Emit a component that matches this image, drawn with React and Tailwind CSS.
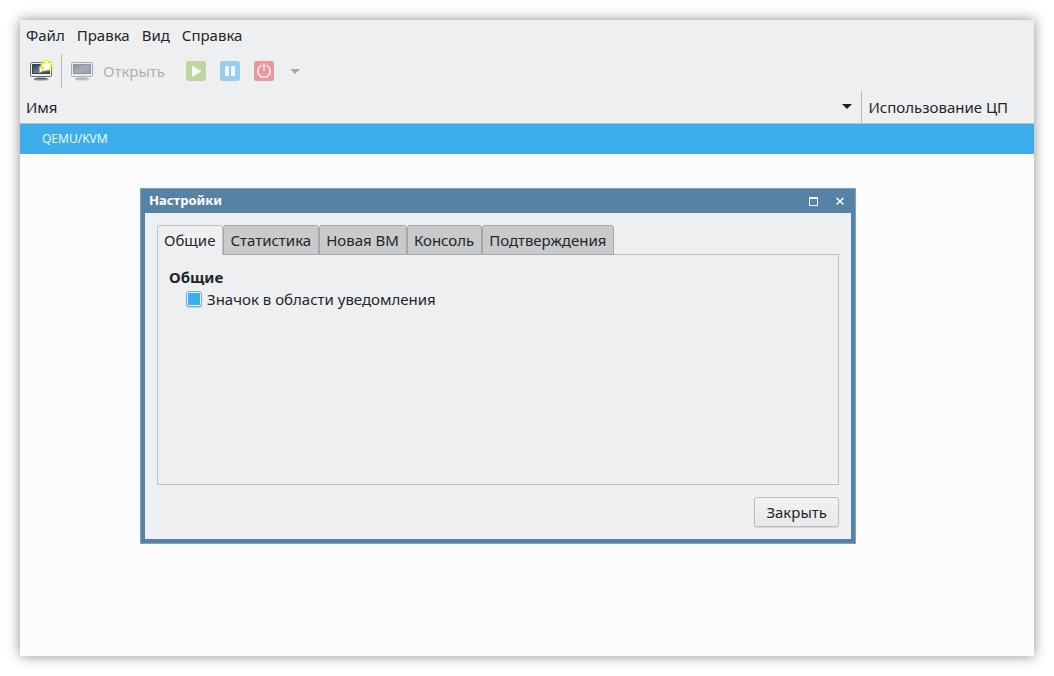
import React, { useState } from 'react';

const menuItems = ['Файл', 'Правка', 'Вид', 'Справка'];
const tabs = ['Общие', 'Статистика', 'Новая ВМ', 'Консоль', 'Подтверждения'];

const Monitor = ({ id, dark, children }) => (
  <svg width="24" height="24" viewBox="0 0 24 24" aria-hidden="true">
    <defs>
      <linearGradient id={id} x1="0" y1="0" x2="1" y2="1">
        <stop offset="0" stopColor={dark ? '#2b3a50' : '#8f98a6'} />
        <stop offset="0.5" stopColor={dark ? '#66758a' : '#a5acb7'} />
        <stop offset="1" stopColor={dark ? '#36445a' : '#959dab'} />
      </linearGradient>
    </defs>
    <ellipse cx="12" cy="20.5" rx="8" ry="1.4" fill="#000" opacity={dark ? 0.25 : 0.1} />
    <path d="M8 17.5h8v2H8z" fill={dark ? '#b5b5b2' : '#d0d0d0'} />
    <rect x="5.5" y="19" width="13" height="1.6" rx="0.8" fill={dark ? '#5c5c5a' : '#acacac'} />
    <rect x="1.5" y="3.5" width="21" height="14" rx="1.2" fill={dark ? '#eeeeec' : '#ececec'} stroke={dark ? '#6a6c69' : '#adadad'} />
    <rect x="3.5" y="5.5" width="17" height="9" fill={`url(#${id})`} stroke={dark ? '#3b4452' : '#8d949f'} />
    {children}
  </svg>
);

const NewVmIcon = () => (
  <Monitor id="screen-new" dark>
    <defs>
      <radialGradient id="star-glow">
        <stop offset="0.7" stopColor="#ecf000" />
        <stop offset="1" stopColor="#ecf000" stopOpacity="0.25" />
      </radialGradient>
    </defs>
    <path d="M10.5 7v7l5.5-3.5z" fill="#fff" />
    <rect x="11" y="1" width="13" height="11.5" rx="3" fill="url(#star-glow)" />
    <path d="M17.2 1.2l1.8 3 4 .1-2.2 3.1 1.5 4-4.2-1.2-3.5 2.2.2-4-3-2.4 3.8-1z" fill="#fff" />
  </Monitor>
);

const RunIcon = () => (
  <svg width="20" height="20" viewBox="0 0 20 20" aria-hidden="true">
    <rect width="20" height="20" rx="3" fill="#bdd69f" />
    <path d="M6.5 5v10.4L15 10.2z" fill="#f7f9f4" stroke="#f7f9f4" strokeWidth="0.8" strokeLinejoin="round" />
  </svg>
);

const PauseIcon = () => (
  <svg width="20" height="20" viewBox="0 0 20 20" aria-hidden="true">
    <rect width="20" height="20" rx="3" fill="#9accf0" />
    <rect x="5" y="5" width="4" height="10" rx="0.6" fill="#f5f9fc" />
    <rect x="11" y="5" width="4" height="10" rx="0.6" fill="#f5f9fc" />
  </svg>
);

const PowerIcon = () => (
  <svg width="20" height="20" viewBox="0 0 20 20" aria-hidden="true">
    <rect width="20" height="20" rx="2" fill="#e8979b" />
    <path d="M7 4.6a6.2 6.2 0 1 0 6 0M10 2.8v6.4" fill="none" stroke="#f8ecec" strokeWidth="1.6" strokeLinecap="round" />
  </svg>
);

const Arrow = ({ className }) => (
  <svg width="10" height="5" viewBox="0 0 10 5" className={className} aria-hidden="true">
    <path d="M0 0h10L5 5z" fill="currentColor" />
  </svg>
);

const Toolbar = () => (
  <div className="flex h-10 items-center px-2">
    <button type="button" aria-label="Создать" className="mr-2 flex pl-px">
      <NewVmIcon />
    </button>
    <div className="h-[34px] w-px bg-[#bbbcbd]" />
    <button type="button" disabled className="ml-2 flex items-center gap-2 text-[#afb0b2]">
      <Monitor id="screen-open" />
      <span className="pl-px">Открыть</span>
    </button>
    <div className="ml-[21px] flex items-center gap-3.5">
      <button type="button" disabled aria-label="Запустить"><RunIcon /></button>
      <button type="button" disabled aria-label="Приостановить"><PauseIcon /></button>
      <button type="button" disabled aria-label="Выключить"><PowerIcon /></button>
    </div>
    <button type="button" disabled aria-label="Действия" className="ml-4 text-[#a5a6a8]">
      <Arrow />
    </button>
  </div>
);

const VmTable = () => (
  <table className="w-full table-fixed border-collapse text-left">
    <thead>
      <tr className="h-8 border-b border-[#bcbdbf] bg-[#eeeff1]">
        <th className="px-1.5 font-normal">
          <button type="button" className="flex w-full items-center justify-between pr-[3px]">
            Имя
            <Arrow className="text-[#1c1e20]" />
          </button>
        </th>
        <th className="w-[173px] border-l border-[#bbbcbd] px-[7px] font-normal">Использование ЦП</th>
      </tr>
    </thead>
    <tbody>
      <tr className="h-[31px] bg-[#3daeec] text-xs text-[#eaf6fd]">
        <td className="px-[22px]">QEMU/KVM</td>
        <td></td>
      </tr>
    </tbody>
  </table>
);

const SettingsDialog = () => {
  const [active, setActive] = useState('Общие');
  const [tray, setTray] = useState(true);

  return (
    <section
      role="dialog"
      aria-labelledby="settings-title"
      className="absolute top-[168px] left-[120px] w-[716px] border border-[#7ea3bf] bg-[#5683a5] px-1 pb-1"
    >
      <header className="flex h-6 items-center justify-between px-1 pb-0.5 text-white">
        <h2 id="settings-title" className="text-[13px] font-bold">Настройки</h2>
        <div className="flex items-center gap-4 pt-0.5 pr-0.5">
          <button type="button" aria-label="Развернуть">
            <svg width="10" height="10" viewBox="0 0 10 10" shapeRendering="crispEdges">
              <path d="M0 1h9v9H0zM1 3v6h7V3z" fill="#fff" fillRule="evenodd" />
            </svg>
          </button>
          <button type="button" aria-label="Закрыть окно">
            <svg width="10" height="10" viewBox="0 0 10 10">
              <path d="M1.5 2l7 6.5M8.5 2l-7 6.5" stroke="#fff" strokeWidth="1.6" />
            </svg>
          </button>
        </div>
      </header>

      <div className="bg-[#eeeff1] p-3">
        <div role="tablist" className="relative -mb-px flex">
          {tabs.map((tab) => (
            <button
              key={tab}
              type="button"
              role="tab"
              aria-selected={tab === active}
              onClick={() => setActive(tab)}
              className={
                tab === active
                  ? 'h-[30px] rounded-t-[3px] border border-b-0 border-[#bfc0c2] bg-[#eeeff1] pr-[7px] pb-px pl-1.5'
                  : 'h-[30px] rounded-t-[3px] border border-[#a6a7a9] bg-[#c9cacc] pr-[7px] pl-1.5'
              }
            >
              {tab}
            </button>
          ))}
        </div>

        <div role="tabpanel" className="h-[231px] border border-[#bfc0c2] px-[11px] py-[11px]">
          <h3 className="leading-[22px] font-bold">{active}</h3>
          {active === 'Общие' && (
            <label className="flex items-center gap-[5px] pl-[17px] leading-[22px]">
              <input
                type="checkbox"
                checked={tray}
                onChange={(e) => setTray(e.target.checked)}
                className="size-4 appearance-none rounded-[3px] border border-[#5bb5ea] bg-[#f6f7f8] p-px shadow-[0_1px_1px_#c8cacc] checked:bg-[#3daeec] checked:bg-clip-content"
              />
              Значок в области уведомления
            </label>
          )}
        </div>

        <div className="mt-3 flex justify-end">
          <button
            type="button"
            className="h-[30px] rounded-[3px] border border-[#bcbdbf] bg-linear-to-b from-[#f2f2f3] to-[#e7e8ea] px-[11px] shadow-[0_1px_1px_#d3d4d6]"
          >
            Закрыть
          </button>
        </div>
      </div>
    </section>
  );
};

export default function App() {
  return (
    <div className="flex min-h-screen bg-white p-5 font-['Noto_Sans',sans-serif] text-[15px] leading-5 text-[#232629]">
      <main className="relative flex-1 bg-[#fcfcfc] shadow-[0_0_12px_rgba(0,0,0,0.45)]">
        <div className="bg-[#eeeff1]">
          <nav className="flex h-[31px] items-center gap-3 px-1.5 pb-px">
            {menuItems.map((item) => (
              <button key={item} type="button">{item}</button>
            ))}
          </nav>
          <Toolbar />
        </div>
        <VmTable />
        <SettingsDialog />
      </main>
    </div>
  );
}
